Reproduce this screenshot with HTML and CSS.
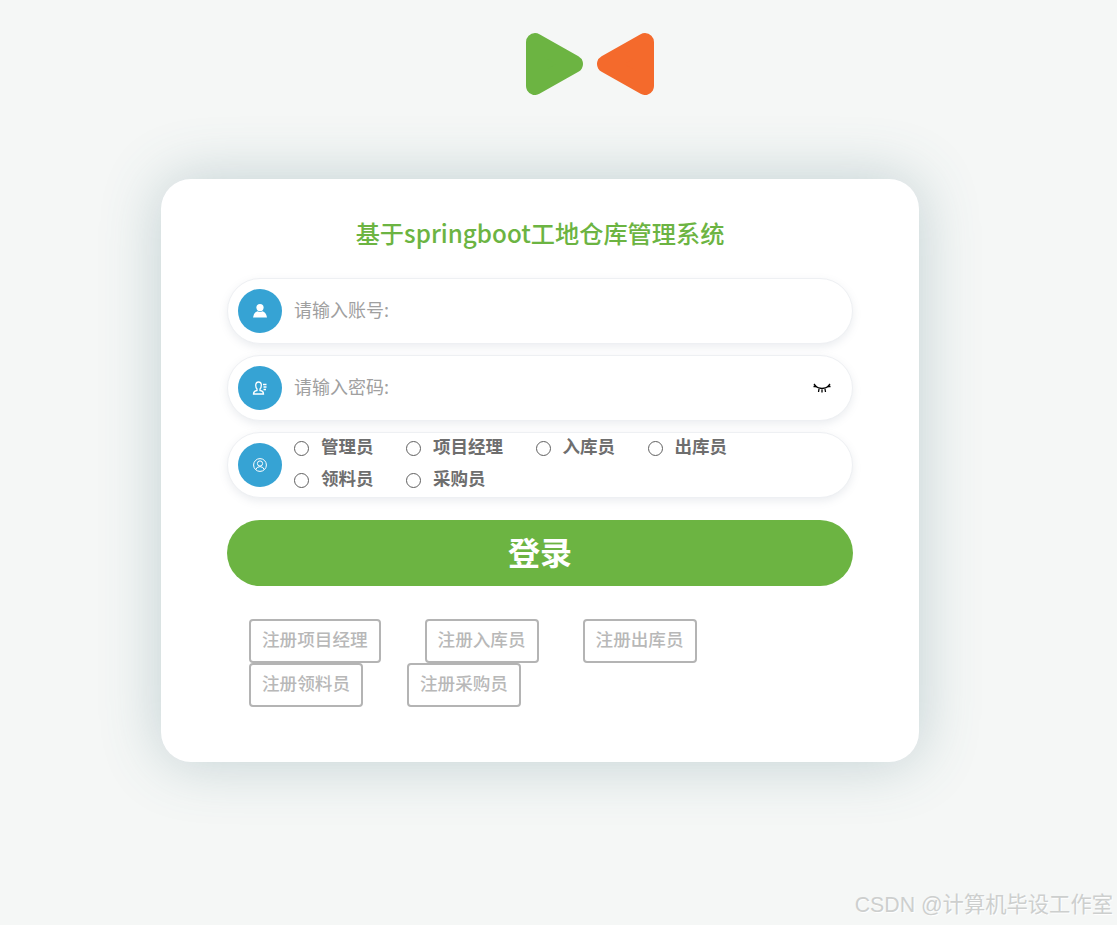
FILE: index.html
```html
<!DOCTYPE html>
<html lang="zh-CN">
<head>
  <meta charset="UTF-8">
  <meta name="viewport" content="width=device-width, initial-scale=1.0">
  <title>基于springboot工地仓库管理系统</title>
  <link rel="stylesheet" href="styles.css">
</head>
<body>
  <div class="logo">
    <svg width="130" height="64" viewBox="0 0 130 64">
      <path class="tri-green" d="M10 10 L49 32 L10 54 Z"/>
      <path class="tri-orange" d="M120 10 L81 32 L120 54 Z"/>
    </svg>
  </div>

  <div class="card">
    <h1 class="title">基于springboot工地仓库管理系统</h1>

    <div class="field">
      <span class="icon">
        <svg width="16" height="16" viewBox="0 0 16 16"><circle cx="8" cy="4.6" r="3.6" fill="#fff"/><path d="M1 14.5 Q2 9 5.5 8.2 Q8 9.6 10.5 8.2 Q14 9 15 14.5 Z" fill="#fff"/></svg>
      </span>
      <input class="field-input" type="text" placeholder="请输入账号:">
    </div>

    <div class="field">
      <span class="icon">
        <svg width="16" height="16" viewBox="0 0 16 16" fill="none" stroke="#fff" stroke-width="1.3"><path d="M1.5 14 Q1.5 11 5 10.5 L5 9 Q3.5 7.5 3.8 4.5 Q4.2 2 6.5 2 Q9 2 9.3 4.5 Q9.5 7.5 8 9 L8 10.5 Q11.5 11 11.5 14 Z"/><path d="M11 4.5 H14.5 M11.5 7 H14.5 M11.5 9.5 H14"/></svg>
      </span>
      <input class="field-input" type="password" placeholder="请输入密码:">
      <svg class="eye" width="18" height="12" viewBox="0 0 18 12" fill="none" stroke="#000" stroke-width="1.3"><path d="M2 4 Q9 9 16 4"/><path d="M1 2 L3.5 5 M0.5 4.5 L3 4.5 M6 7 L5.5 10 M9 7.5 L9 10.5 M12 7 L12.5 10 M17 2 L14.5 5 M17.5 4.5 L15 4.5"/></svg>
    </div>

    <div class="field">
      <span class="icon">
        <svg width="16" height="16" viewBox="0 0 16 16" fill="none" stroke="#fff" stroke-width="1"><circle cx="8" cy="8" r="6.4"/><circle cx="8" cy="6.5" r="2.6"/><path d="M3.8 12.6 Q4.5 9.8 8 9.6 Q11.5 9.8 12.2 12.6"/></svg>
      </span>
      <div class="roles">
        <label class="role"><input type="radio" name="role"><span>管理员</span></label>
        <label class="role"><input type="radio" name="role"><span>项目经理</span></label>
        <label class="role"><input type="radio" name="role"><span>入库员</span></label>
        <label class="role"><input type="radio" name="role"><span>出库员</span></label>
        <label class="role"><input type="radio" name="role"><span>领料员</span></label>
        <label class="role"><input type="radio" name="role"><span>采购员</span></label>
      </div>
    </div>

    <button class="login-btn">登录</button>

    <div class="register">
      <a class="reg-btn">注册项目经理</a>
      <a class="reg-btn">注册入库员</a>
      <a class="reg-btn">注册出库员</a>
      <a class="reg-btn">注册领料员</a>
      <a class="reg-btn">注册采购员</a>
    </div>
  </div>

  <div class="watermark">CSDN @计算机毕设工作室</div>
</body>
</html>
```

FILE: styles.css
```css
* {
  box-sizing: border-box;
}
body {
  margin: 0;
  height: 925px;
  overflow: hidden;
  background: #f5f7f6;
  font-family: "Noto Sans CJK SC", "Noto Sans", sans-serif;
}
.logo {
  display: flex;
  justify-content: center;
  height: 179px;
  padding-top: 32px;
  padding-left: 62px;
}
.logo svg {
  display: block;
  filter: blur(0.6px);
}
.tri-green {
  fill: #6cb442;
  stroke: #6cb442;
  stroke-width: 18;
  stroke-linejoin: round;
}
.tri-orange {
  fill: #f46a2c;
  stroke: #f46a2c;
  stroke-width: 18;
  stroke-linejoin: round;
}
.card {
  width: 758px;
  height: 583px;
  margin-left: 161px;
  padding: 38px 66px 0;
  background: #fff;
  border-radius: 30px;
  box-shadow: 0 0 60px rgba(70, 115, 125, 0.3);
}
.title {
  margin: 0 0 25px;
  height: 36px;
  line-height: 32px;
  padding-bottom: 4px;
  text-align: center;
  font-size: 24.2px;
  font-weight: 500;
  color: #6cb442;
}
.field {
  display: flex;
  align-items: center;
  height: 66px;
  margin-bottom: 11px;
  padding-left: 10px;
  border: 1px solid #eef0f3;
  border-radius: 33px;
  background: #fff;
  box-shadow: 0 3px 8px rgba(110, 130, 150, 0.14);
}
.icon {
  display: flex;
  align-items: center;
  justify-content: center;
  flex: none;
  width: 44px;
  height: 44px;
  border-radius: 50%;
  background: #36a3d4;
}
.field-input {
  flex: 1;
  min-width: 0;
  margin-left: 10px;
  padding-bottom: 5px;
  border: none;
  outline: none;
  background: transparent;
  font-family: inherit;
  font-size: 18px;
}
.field-input::placeholder {
  color: #a0a0a0;
}
.eye {
  flex: none;
  margin-right: 21px;
}
.roles {
  display: flex;
  flex-wrap: wrap;
  flex: 1;
  margin-left: 12px;
}
.role {
  display: flex;
  align-items: center;
  height: 32px;
  padding-right: 32.5px;
  font-size: 17.5px;
  font-weight: 700;
  color: #6e6e6e;
}
.role span {
  padding-bottom: 8px;
}
.role input {
  appearance: none;
  width: 15px;
  height: 15px;
  margin: 0 12px 2px 0;
  border: 1px solid #606060;
  border-radius: 50%;
  background: #fff;
}
.login-btn {
  display: block;
  width: 100%;
  height: 66px;
  margin-top: 22px;
  padding-bottom: 6px;
  border: none;
  border-radius: 33px;
  background: #6cb442;
  color: #fff;
  font-family: inherit;
  font-size: 32px;
  font-weight: 700;
}
.register {
  display: flex;
  flex-wrap: wrap;
  column-gap: 44px;
  width: 520px;
  margin-top: 33px;
  margin-left: 22px;
}
.reg-btn {
  height: 44px;
  padding: 0 11px;
  line-height: 35px;
  border: 2px solid #b4b4b4;
  border-radius: 4px;
  font-size: 17.6px;
  font-weight: 500;
  color: #b8b8b8;
}
.watermark {
  position: absolute;
  right: 4px;
  top: 888px;
  font-size: 21.3px;
  line-height: 34px;
  color: #cdcfce;
  text-shadow: 1px 1px 1px #fff;
  font-family: "Liberation Sans", "Noto Sans CJK SC", sans-serif;
  white-space: nowrap;
}
```
